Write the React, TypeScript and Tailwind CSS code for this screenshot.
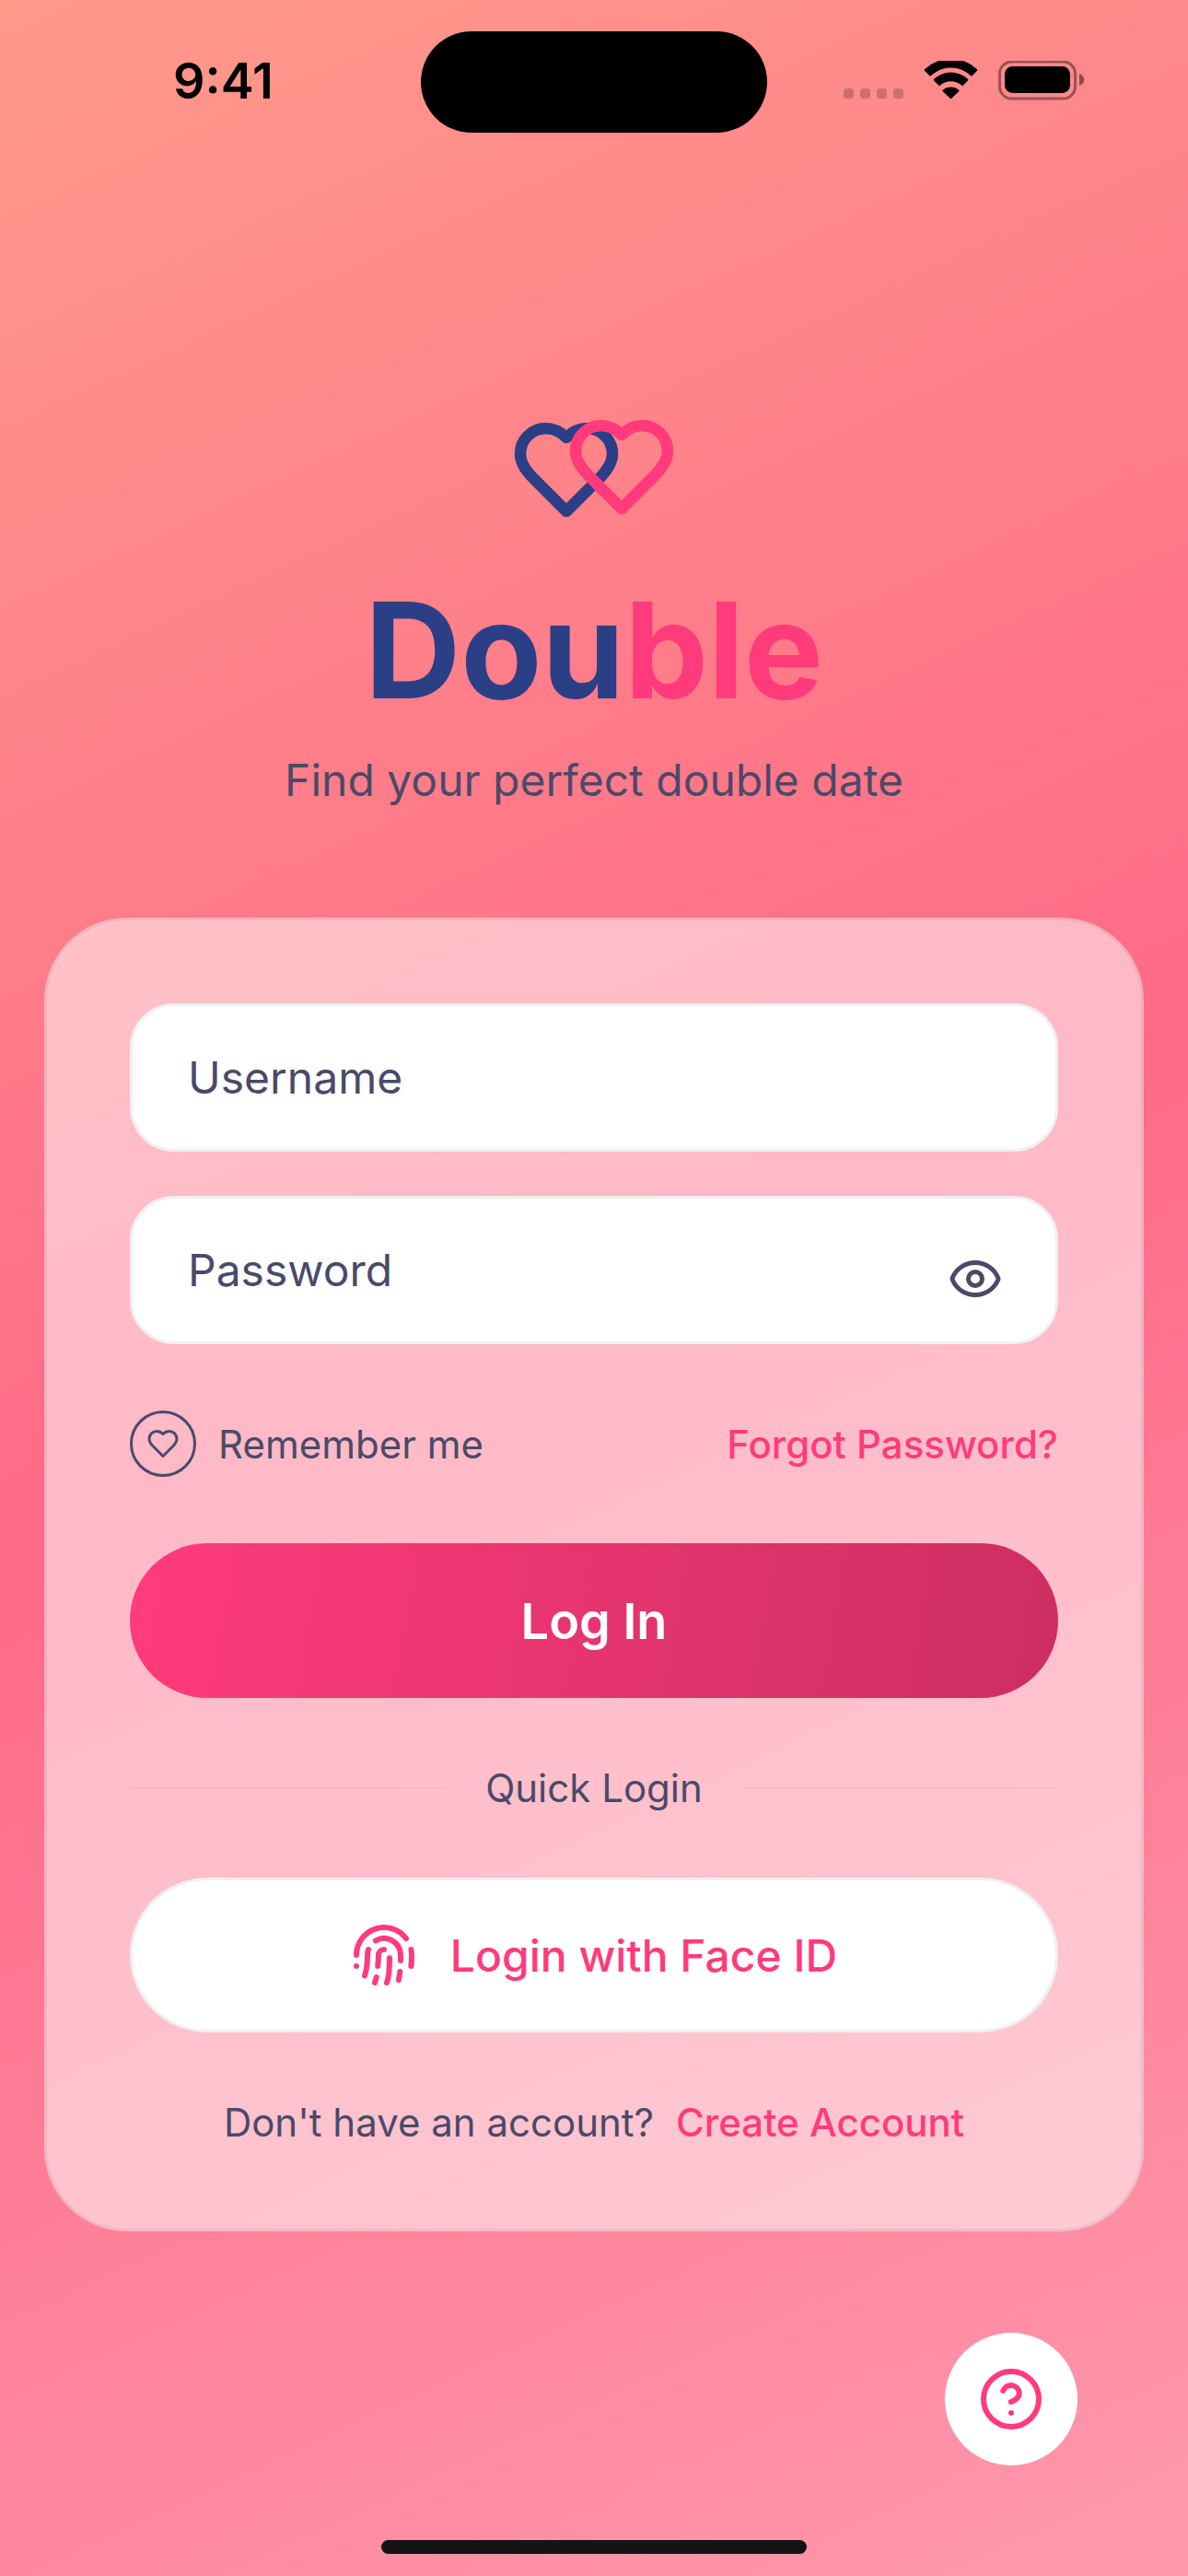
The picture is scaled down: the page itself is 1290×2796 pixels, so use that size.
import { useState } from "react";

const HEART =
  "M19 14c1.49-1.46 3-3.21 3-5.5A5.5 5.5 0 0 0 16.5 3c-1.76 0-3 .5-4.5 2-1.5-1.5-2.74-2-4.5-2A5.5 5.5 0 0 0 2 8.5c0 2.3 1.5 4.05 3 5.5l7 7Z";

const strokeProps = {
  viewBox: "0 0 24 24",
  fill: "none",
  stroke: "currentColor",
  strokeLinecap: "round" as const,
  strokeLinejoin: "round" as const,
  "aria-hidden": true,
};

function StatusBar() {
  return (
    <header className="grid grid-cols-[1fr_376px_1fr] items-start pt-[34px] text-black">
      <div className="flex h-27 items-center pl-[188px] text-[54px] leading-none font-semibold">9:41</div>
      <div className="h-[110px] rounded-full bg-black" />
      <svg viewBox="916 66 262 44" className="mt-8 ml-[83px] h-11 w-[262px]" aria-hidden="true">
        <g fillOpacity="0.2">
          <rect x="916" y="96" width="11" height="11" rx="3.5" />
          <rect x="934" y="96" width="11" height="11" rx="3.5" />
          <rect x="952" y="96" width="11" height="11" rx="3.5" />
          <rect x="970" y="96" width="11" height="11" rx="3.5" />
        </g>
        <path d="M1032.5 73.6c8 0 15.8 3.1 21.6 8.6.4.4 1.1.4 1.5 0l5.4-5.4q.7-.8 0-1.6a41.5 41.5 0 0 0-57 0q-.7.8 0 1.6l5.4 5.4c.4.4 1.1.4 1.5 0 5.8-5.5 13.6-8.6 21.6-8.6z" />
        <path d="M1032.5 88.2c4.4 0 8.6 1.6 11.8 4.5.5.4 1.1.4 1.5 0l5.1-5.3q.8-.8 0-1.6a26.8 26.8 0 0 0-36.8 0q-.8.8 0 1.6l5.1 5.3c.4.4 1 .4 1.5 0 3.2-2.9 7.4-4.5 11.8-4.5z" />
        <path d="M1041.2 97.7q.8.8 0 1.5l-8 7.6q-.7.7-1.4 0l-8-7.6q-.8-.7 0-1.5a13.2 13.2 0 0 1 17.4 0z" />
        <rect x="1085.5" y="67" width="82" height="40" rx="13" fill="none" stroke="black" strokeOpacity="0.4" strokeWidth="3" />
        <rect x="1091" y="72" width="71" height="29" rx="8.5" />
        <path d="M1172 80c7 2.5 7 10.5 0 13z" fillOpacity="0.45" />
      </svg>
    </header>
  );
}

function Logo() {
  return (
    <svg viewBox="0 0 180 123" className="h-[123px] w-[180px]" fill="none" strokeLinecap="round" strokeLinejoin="round" aria-hidden="true">
      <g strokeWidth="2.5">
        <path d={HEART} stroke="#2b3f87" transform="translate(0 3) scale(5)" />
        <path d={HEART} stroke="#ff3b7c" transform="translate(60 0) scale(5)" />
      </g>
    </svg>
  );
}

export default function App() {
  const [showPassword, setShowPassword] = useState(false);
  const [remember, setRemember] = useState(false);

  return (
    <div className="flex min-h-screen flex-col bg-[linear-gradient(155.2deg,#ff9a8b_0%,#ff6a88_50%,#ff99ac_100%)] font-['Inter',sans-serif] text-[42px] leading-[51px] text-[#4a4a68]">
      <StatusBar />

      <main className="flex flex-col px-12 pt-[303px]">
        <div className="flex flex-col items-center">
          <Logo />
          <h1 className="mt-[49px] text-[144px] leading-[174px] font-bold text-[#2b3f87]">
            Dou<span className="text-[#ff3b7c]">ble</span>
          </h1>
          <p className="mt-6 text-[48px] leading-[60px]">Find your perfect double date</p>
        </div>

        <form
          onSubmit={(e) => e.preventDefault()}
          className="mt-[119px] flex flex-col gap-18 rounded-[90px] border-3 border-black/6 bg-white/53 p-[90px]"
        >
          <div className="flex flex-col gap-12">
            <input
              type="text"
              aria-label="Username"
              placeholder="Username"
              className="h-[161px] w-full rounded-[48px] border-3 border-[#f0f0f0] bg-white px-15 text-[48px] outline-none placeholder:text-[#4a4a68] placeholder:opacity-100"
            />
            <div className="relative">
              <input
                type={showPassword ? "text" : "password"}
                aria-label="Password"
                placeholder="Password"
                className="block h-[161px] w-full rounded-[48px] border-3 border-[#f0f0f0] bg-white pr-36 pl-15 text-[48px] outline-none placeholder:text-[#4a4a68] placeholder:opacity-100"
              />
              <button
                type="button"
                aria-label="Show password"
                onClick={() => setShowPassword(!showPassword)}
                className="absolute top-15 right-15"
              >
                <svg {...strokeProps} strokeWidth={2} className="size-15">
                  <path d="M2.062 12.348a1 1 0 0 1 0-.696 10.75 10.75 0 0 1 19.876 0 1 1 0 0 1 0 .696 10.75 10.75 0 0 1-19.876 0" />
                  <circle cx="12" cy="12" r="3" />
                </svg>
              </button>
            </div>
          </div>

          <div className="flex items-center justify-between">
            <label className="flex items-center gap-6">
              <input
                type="checkbox"
                checked={remember}
                onChange={() => setRemember(!remember)}
                className="peer sr-only"
              />
              <span className="flex size-18 items-center justify-center rounded-full border-3 border-[#4a4a68] peer-checked:bg-white">
                <svg {...strokeProps} strokeWidth={2} className="size-9">
                  <path d={HEART} />
                </svg>
              </span>
              Remember me
            </label>
            <a href="#forgot" className="font-medium text-[#ff3b7c]">
              Forgot Password?
            </a>
          </div>

          <button
            type="submit"
            className="h-42 rounded-full bg-[linear-gradient(99.5deg,#ff3b7c_0%,#cc2e62_100%)] text-[54px] font-semibold text-white"
          >
            Log In
          </button>

          <div className="flex items-center gap-11">
            <span className="h-px flex-1 bg-black/6" />
            Quick Login
            <span className="h-px flex-1 bg-black/6" />
          </div>

          <button
            type="button"
            className="flex h-42 items-center justify-center gap-9 rounded-full border-3 border-[#f0f0f0] bg-white text-[48px] font-medium text-[#ff3b7c]"
          >
            <svg {...strokeProps} strokeWidth={2} className="size-18">
              <path d="M12 10a2 2 0 0 0-2 2c0 1.02-.1 2.51-.26 4" />
              <path d="M14 13.12c0 2.38 0 6.38-1 8.88" />
              <path d="M17.29 21.02c.12-.6.43-2.3.5-3.02" />
              <path d="M2 12a10 10 0 0 1 18-6" />
              <path d="M2 16h.01" />
              <path d="M21.8 16c.2-2 .131-5.354 0-6" />
              <path d="M5 19.5C5.5 18 6 15 6 12a6 6 0 0 1 .34-2" />
              <path d="M8.65 22c.21-.66.45-1.32.57-2" />
              <path d="M9 6.8a6 6 0 0 1 9 5.2v2" />
            </svg>
            Login with Face ID
          </button>

          <p className="flex items-center justify-center gap-6">
            Don't have an account?
            <a href="#create" className="font-medium text-[#ff3b7c]">
              Create Account
            </a>
          </p>
        </form>
      </main>

      <button
        type="button"
        aria-label="Help"
        className="mt-[110px] mr-30 flex size-36 items-center justify-center self-end rounded-full bg-white text-[#ff3b7c]"
      >
        <svg {...strokeProps} strokeWidth={2} className="size-18">
          <circle cx="12" cy="12" r="10" />
          <path d="M9.09 9a3 3 0 0 1 5.83 1c0 2-3 3-3 3" />
          <path d="M12 17h.01" />
        </svg>
      </button>

      <div className="mt-auto mb-6 h-[15px] w-[462px] self-center rounded-full bg-[#141414]" />
    </div>
  );
}
